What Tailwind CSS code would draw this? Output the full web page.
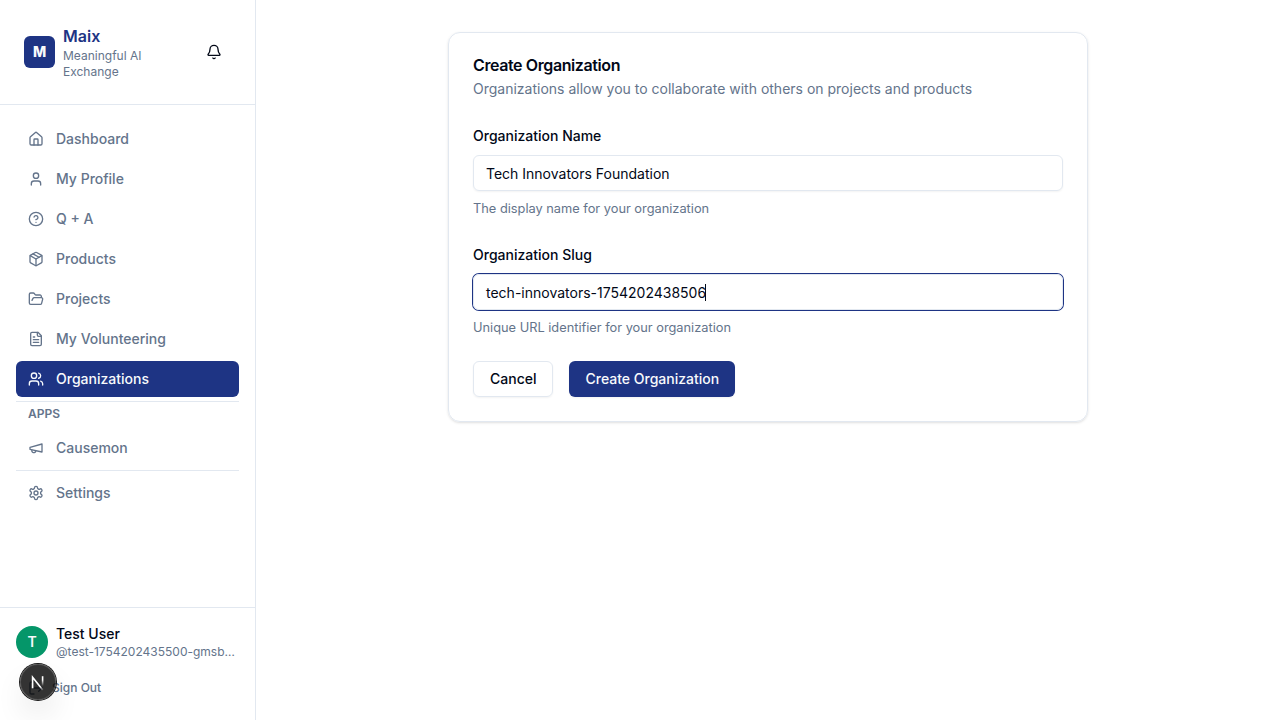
<!DOCTYPE html>
<html lang="en">
<head>
<meta charset="utf-8">
<title>Maix - Create Organization</title>
<script src="https://cdn.jsdelivr.net/npm/@tailwindcss/browser@4"></script>
</head>
<body class="flex h-[720px] w-[1280px] overflow-hidden bg-white font-['Inter',sans-serif] text-base text-[#020817] antialiased">
<aside class="flex w-64 shrink-0 flex-col border-r border-[#e2e8f0]">
  <header class="flex items-center justify-between border-b border-[#e2e8f0] p-6 pr-[23px]">
    <div class="flex items-center gap-2">
      <div class="flex h-8 w-[31px] items-center justify-center rounded-md bg-[#1e3484] text-sm font-extrabold text-[#f8fafc]">M</div>
      <div class="w-[100px]">
        <div class="font-semibold leading-6 text-[#1e3484]">Maix</div>
        <div class="text-xs text-[#64748b]">Meaningful AI Exchange</div>
      </div>
    </div>
    <button class="flex size-9 items-center justify-center" aria-label="Notifications">
      <svg class="size-4" viewBox="0 0 24 24" fill="none" stroke="currentColor" stroke-width="2" stroke-linecap="round" stroke-linejoin="round"><path d="M10.268 21a2 2 0 0 0 3.464 0"/><path d="M3.262 15.326A1 1 0 0 0 4 17h16a1 1 0 0 0 .74-1.673C19.41 13.956 18 12.499 18 8A6 6 0 0 0 6 8c0 4.499-1.411 5.956-2.738 7.326"/></svg>
    </button>
  </header>
  <nav class="flex flex-1 flex-col gap-1 p-4 text-sm font-medium text-[#64748b]">
    <a class="flex h-9 items-center gap-3 rounded-md px-3"><svg class="size-4" viewBox="0 0 24 24" fill="none" stroke="currentColor" stroke-width="2" stroke-linecap="round" stroke-linejoin="round"><path d="M15 21v-8a1 1 0 0 0-1-1h-4a1 1 0 0 0-1 1v8"/><path d="M3 10a2 2 0 0 1 .709-1.528l7-5.999a2 2 0 0 1 2.582 0l7 5.999A2 2 0 0 1 21 10v9a2 2 0 0 1-2 2H5a2 2 0 0 1-2-2z"/></svg>Dashboard</a>
    <a class="flex h-9 items-center gap-3 rounded-md px-3"><svg class="size-4" viewBox="0 0 24 24" fill="none" stroke="currentColor" stroke-width="2" stroke-linecap="round" stroke-linejoin="round"><path d="M19 21v-2a4 4 0 0 0-4-4H9a4 4 0 0 0-4 4v2"/><circle cx="12" cy="7" r="4"/></svg>My Profile</a>
    <a class="flex h-9 items-center gap-3 rounded-md px-3"><svg class="size-4" viewBox="0 0 24 24" fill="none" stroke="currentColor" stroke-width="2" stroke-linecap="round" stroke-linejoin="round"><circle cx="12" cy="12" r="10"/><path d="M9.09 9a3 3 0 0 1 5.83 1c0 2-3 3-3 3"/><path d="M12 17h.01"/></svg>Q + A</a>
    <a class="flex h-9 items-center gap-3 rounded-md px-3"><svg class="size-4" viewBox="0 0 24 24" fill="none" stroke="currentColor" stroke-width="2" stroke-linecap="round" stroke-linejoin="round"><path d="M11 21.73a2 2 0 0 0 2 0l7-4A2 2 0 0 0 21 16V8a2 2 0 0 0-1-1.73l-7-4a2 2 0 0 0-2 0l-7 4A2 2 0 0 0 3 8v8a2 2 0 0 0 1 1.73z"/><path d="M12 22V12"/><path d="M3.29 7 12 12l8.71-5"/><path d="m7.5 4.27 9 5.15"/></svg>Products</a>
    <a class="flex h-9 items-center gap-3 rounded-md px-3"><svg class="size-4" viewBox="0 0 24 24" fill="none" stroke="currentColor" stroke-width="2" stroke-linecap="round" stroke-linejoin="round"><path d="m6 14 1.5-2.9A2 2 0 0 1 9.24 10H20a2 2 0 0 1 1.94 2.5l-1.54 6a2 2 0 0 1-1.95 1.5H4a2 2 0 0 1-2-2V5a2 2 0 0 1 2-2h3.9a2 2 0 0 1 1.69.9l.81 1.2a2 2 0 0 0 1.67.9H18a2 2 0 0 1 2 2v2"/></svg>Projects</a>
    <a class="flex h-9 items-center gap-3 rounded-md px-3"><svg class="size-4" viewBox="0 0 24 24" fill="none" stroke="currentColor" stroke-width="2" stroke-linecap="round" stroke-linejoin="round"><path d="M15 2H6a2 2 0 0 0-2 2v16a2 2 0 0 0 2 2h12a2 2 0 0 0 2-2V7Z"/><path d="M14 2v4a2 2 0 0 0 2 2h4"/><path d="M10 9H8"/><path d="M16 13H8"/><path d="M16 17H8"/></svg>My Volunteering</a>
    <a class="flex h-9 items-center gap-3 rounded-md bg-[#1e3484] px-3 text-[#f8fafc]"><svg class="size-4" viewBox="0 0 24 24" fill="none" stroke="currentColor" stroke-width="2" stroke-linecap="round" stroke-linejoin="round"><path d="M16 21v-2a4 4 0 0 0-4-4H6a4 4 0 0 0-4 4v2"/><circle cx="9" cy="7" r="4"/><path d="M22 21v-2a4 4 0 0 0-3-3.87"/><path d="M16 3.13a4 4 0 0 1 0 7.75"/></svg>Organizations</a>
    <div class="h-px bg-[#e2e8f0]"></div>
    <div class="mb-1 px-3 text-xs font-semibold">APPS</div>
    <a class="flex h-9 items-center gap-3 rounded-md px-3"><svg class="size-4" viewBox="0 0 24 24" fill="none" stroke="currentColor" stroke-width="2" stroke-linecap="round" stroke-linejoin="round"><path d="m3 11 18-5v12L3 14v-3z"/><path d="M11.6 16.8a3 3 0 1 1-5.8-1.6"/></svg>Causemon</a>
    <div class="h-px bg-[#e2e8f0]"></div>
    <a class="flex h-9 items-center gap-3 rounded-md px-3"><svg class="size-4" viewBox="0 0 24 24" fill="none" stroke="currentColor" stroke-width="2" stroke-linecap="round" stroke-linejoin="round"><path d="M12.22 2h-.44a2 2 0 0 0-2 2v.18a2 2 0 0 1-1 1.73l-.43.25a2 2 0 0 1-2 0l-.15-.08a2 2 0 0 0-2.73.73l-.22.38a2 2 0 0 0 .73 2.73l.15.1a2 2 0 0 1 1 1.72v.51a2 2 0 0 1-1 1.74l-.15.09a2 2 0 0 0-.73 2.73l.22.38a2 2 0 0 0 2.73.73l.15-.08a2 2 0 0 1 2 0l.43.25a2 2 0 0 1 1 1.73V20a2 2 0 0 0 2 2h.44a2 2 0 0 0 2-2v-.18a2 2 0 0 1 1-1.73l.43-.25a2 2 0 0 1 2 0l.15.08a2 2 0 0 0 2.73-.73l.22-.39a2 2 0 0 0-.73-2.73l-.15-.08a2 2 0 0 1-1-1.74v-.5a2 2 0 0 1 1-1.74l.15-.09a2 2 0 0 0 .73-2.73l-.22-.38a2 2 0 0 0-2.73-.73l-.15.08a2 2 0 0 1-2 0l-.43-.25a2 2 0 0 1-1-1.73V4a2 2 0 0 0-2-2z"/><circle cx="12" cy="12" r="3"/></svg>Settings</a>
  </nav>
  <footer class="border-t border-[#e2e8f0] p-4">
    <div class="mb-3 flex items-center gap-2">
      <div class="flex size-8 shrink-0 items-center justify-center rounded-full bg-[#059669] text-sm font-semibold text-[#f8fafc]">T</div>
      <div class="min-w-0 flex-1">
        <div class="text-sm font-medium">Test User</div>
        <div class="truncate text-xs text-[#64748b]">@test-1754202435500-gmsb…</div>
      </div>
    </div>
    <button class="flex h-8 w-full items-center gap-2 px-3 text-xs font-medium text-[#64748b]"><svg class="size-4" viewBox="0 0 24 24" fill="none" stroke="currentColor" stroke-width="2" stroke-linecap="round" stroke-linejoin="round"><path d="M9 21H5a2 2 0 0 1-2-2V5a2 2 0 0 1 2-2h4"/><path d="m16 17 5-5-5-5"/><path d="M21 12H9"/></svg>Sign Out</button>
  </footer>
</aside>
<main class="flex-1 p-8">
  <section class="mx-auto w-[640px] rounded-xl border border-[#e2e8f0] p-6 shadow-sm">
    <h1 class="font-semibold leading-none tracking-tight">Create Organization</h1>
    <p class="mt-1.5 text-sm text-[#64748b]">Organizations allow you to collaborate with others on projects and products</p>
    <form class="mt-6 flex flex-col gap-6">
      <div class="flex flex-col gap-2">
        <div class="h-6 pt-[3px] text-sm font-medium">Organization Name</div>
        <div class="flex h-9 items-center rounded-md border border-[#e2e8f0] px-3 pt-0.5 text-sm shadow-xs">Tech Innovators Foundation</div>
        <p class="text-[12.8px] leading-[19.2px] text-[#64748b]">The display name for your organization</p>
      </div>
      <div class="flex flex-col gap-2">
        <div class="h-6 pt-[3px] text-sm font-medium">Organization Slug</div>
        <div class="flex h-9 items-center rounded-md border border-[#e2e8f0] px-3 pt-0.5 text-sm ring-1 ring-[#1e3484]">tech-innovators-1754202438506<span class="-ml-px mb-px h-[17px] w-px bg-[#020817]"></span></div>
        <p class="text-[12.8px] leading-[19.2px] text-[#64748b]">Unique URL identifier for your organization</p>
      </div>
      <div class="flex gap-4 text-sm font-medium">
        <button type="button" class="h-9 rounded-md border border-[#e2e8f0] px-4 shadow-xs">Cancel</button>
        <button type="button" class="h-9 rounded-md bg-[#1e3484] px-4 text-[#f8fafc] shadow-xs">Create Organization</button>
      </div>
    </form>
  </section>
</main>
<div class="fixed bottom-5 left-5 flex size-9 items-center justify-center rounded-full bg-black/80 shadow-[0_0_0_1px_#171717,inset_0_0_0_1px_rgba(255,255,255,0.14),0_16px_32px_-8px_rgba(0,0,0,0.24)]">
  <svg class="size-10 shrink-0" viewBox="0 0 40 40" fill="none" stroke-width="1.6">
    <defs><linearGradient id="stem" x1="25" y1="14" x2="25" y2="24" gradientUnits="userSpaceOnUse"><stop offset=".4" stop-color="#fff"/><stop offset="1" stop-color="#fff" stop-opacity="0"/></linearGradient><linearGradient id="diag" x1="20" y1="20" x2="26" y2="28" gradientUnits="userSpaceOnUse"><stop offset=".5" stop-color="#fff"/><stop offset="1" stop-color="#fff" stop-opacity="0"/></linearGradient></defs>
    <path d="M14.6 26.2V15.2L24.8 28" stroke="url(#diag)"/><path d="M24.6 14.2v10" stroke="url(#stem)"/>
  </svg>
</div>
</body>
</html>
